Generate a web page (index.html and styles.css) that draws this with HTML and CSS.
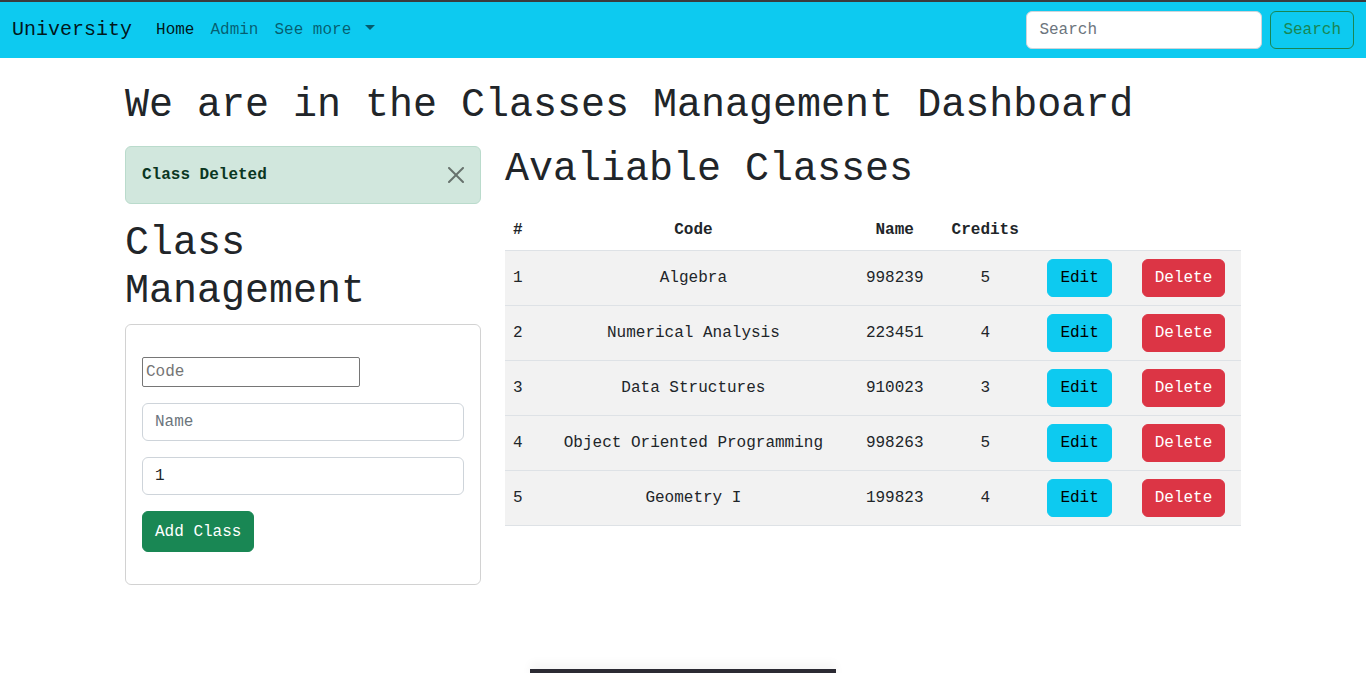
FILE: index.html
```html
<!DOCTYPE html>
<html lang="en">
<head>
<meta charset="utf-8">
<title>Classes Management</title>
<link rel="stylesheet" href="styles.css">
</head>
<body>
<nav class="navbar">
  <a class="brand" href="#">University</a>
  <ul class="nav">
    <li><a class="nav-link active" href="#">Home</a></li>
    <li><a class="nav-link" href="#">Admin</a></li>
    <li><a class="nav-link dropdown" href="#">See more</a></li>
  </ul>
  <form class="search">
    <input class="form-control search-input" type="search" placeholder="Search">
    <button class="btn btn-outline-success" type="button">Search</button>
  </form>
</nav>

<main class="container">
  <h1 class="title">We are in the Classes Management Dashboard</h1>
  <div class="row">
    <section class="col-left">
      <div class="alert">
        <strong>Class Deleted</strong>
        <button class="btn-close" type="button" aria-label="Close">
          <svg viewBox="0 0 16 16" width="16" height="16"><path d="M.293.293a1 1 0 0 1 1.414 0L8 6.586 14.293.293a1 1 0 1 1 1.414 1.414L9.414 8l6.293 6.293a1 1 0 0 1-1.414 1.414L8 9.414l-6.293 6.293a1 1 0 0 1-1.414-1.414L6.586 8 .293 1.707a1 1 0 0 1 0-1.414z" fill="#000"/></svg>
        </button>
      </div>
      <h1 class="heading">Class Management</h1>
      <div class="card">
        <form class="card-body">
          <div class="field field-first"><input class="plain-input" type="text" placeholder="Code"></div>
          <div class="field"><input class="form-control" type="text" placeholder="Name"></div>
          <div class="field"><input class="form-control" type="number" value="1"></div>
          <div class="field"><button class="btn btn-success btn-add" type="button">Add Class</button></div>
        </form>
      </div>
    </section>
    <section class="col-right">
      <h1 class="heading">Avaliable Classes</h1>
      <table class="table">
        <thead>
          <tr><th>#</th><th class="c">Code</th><th class="c">Name</th><th class="c">Credits</th><th></th><th></th></tr>
        </thead>
        <tbody>
          <tr><td>1</td><td class="c">Algebra</td><td class="c">998239</td><td class="c">5</td><td class="c"><button class="btn btn-info">Edit</button></td><td class="c"><button class="btn btn-danger">Delete</button></td></tr>
          <tr><td>2</td><td class="c">Numerical Analysis</td><td class="c">223451</td><td class="c">4</td><td class="c"><button class="btn btn-info">Edit</button></td><td class="c"><button class="btn btn-danger">Delete</button></td></tr>
          <tr><td>3</td><td class="c">Data Structures</td><td class="c">910023</td><td class="c">3</td><td class="c"><button class="btn btn-info">Edit</button></td><td class="c"><button class="btn btn-danger">Delete</button></td></tr>
          <tr><td>4</td><td class="c">Object Oriented Programming</td><td class="c">998263</td><td class="c">5</td><td class="c"><button class="btn btn-info">Edit</button></td><td class="c"><button class="btn btn-danger">Delete</button></td></tr>
          <tr><td>5</td><td class="c">Geometry I</td><td class="c">199823</td><td class="c">4</td><td class="c"><button class="btn btn-info">Edit</button></td><td class="c"><button class="btn btn-danger">Delete</button></td></tr>
        </tbody>
      </table>
    </section>
  </div>
  <div class="footer-bar"></div>
</main>
</body>
</html>
```

FILE: styles.css
```css
* { box-sizing: border-box; }
html, body { margin: 0; }
body {
  font-family: "Liberation Mono", "DejaVu Sans Mono", monospace;
  font-size: 16px;
  line-height: 1.5;
  color: #212529;
  background: #fff;
  overflow: hidden;
}
a { text-decoration: none; }

.navbar {
  display: flex;
  align-items: center;
  background: #0dcaf0;
  border-top: 2px solid #3a3b3d;
  padding: 8px 12px;
}
.brand {
  font-size: 20px;
  line-height: 30px;
  color: rgba(0,0,0,.9);
  margin-right: 16px;
  padding: 5px 0;
}
.nav {
  display: flex;
  list-style: none;
  margin: 0;
  padding: 0;
  flex: 1;
}
.nav-link {
  display: block;
  padding: 8px;
  color: rgba(0,0,0,.55);
}
.nav-link.active { color: rgba(0,0,0,.9); }
.dropdown::after {
  content: "";
  display: inline-block;
  margin-left: 14px;
  vertical-align: 4px;
  border-top: 5px solid;
  border-left: 5px solid transparent;
  border-right: 5px solid transparent;
}
.search { display: flex; }
.form-control {
  display: block;
  width: 100%;
  font: inherit;
  line-height: 24px;
  padding: 6px 12px;
  color: #212529;
  background: #fff;
  border: 1px solid #ced4da;
  border-radius: 6px;
}
.form-control::placeholder { color: #6c757d; }
.search-input { width: 236px; margin-right: 8px; }

.btn {
  display: inline-block;
  font: inherit;
  line-height: 24px;
  padding: 6px 12px;
  border: 1px solid transparent;
  border-radius: 6px;
  cursor: pointer;
}
.btn-add { padding: 8px 12px 7px; }
.btn-outline-success { color: #198754; border-color: #198754; background: transparent; }
.btn-success { color: #fff; background: #198754; border-color: #198754; }
.btn-info { color: #000; background: #0dcaf0; border-color: #0dcaf0; }
.btn-danger { color: #fff; background: #dc3545; border-color: #dc3545; }

.container {
  max-width: 1140px;
  margin: 0 auto;
  padding: 0 12px;
}
h1 {
  font-size: 40px;
  font-weight: 400;
  line-height: 1.2;
  margin: 0 0 8px;
}
.title { margin-top: 24px; }
.row {
  display: grid;
  grid-template-columns: 356px 1fr;
  column-gap: 24px;
  margin-top: 16px;
}
.col-left, .col-right { min-width: 0; }

.alert {
  position: relative;
  padding: 16px 48px 16px 16px;
  margin-bottom: 16px;
  color: #0a3622;
  background: #d1e7dd;
  border: 1px solid #badbcc;
  border-radius: 6px;
}
.btn-close {
  position: absolute;
  top: 0;
  right: 0;
  padding: 20px 16px;
  border: 0;
  background: transparent;
  opacity: .5;
  line-height: 0;
}
.btn-close svg { display: block; }

.card {
  border: 1px solid rgba(0,0,0,.175);
  border-radius: 6px;
}
.card-body { padding: 16px; }
.field { margin-bottom: 16px; }
.field-first { padding-top: 16px; }
.plain-input {
  display: block;
  width: 218px;
  height: 30px;
  font: inherit;
  padding: 1px 3px;
  border: 1px solid #767676;
  border-radius: 2px;
  color: #212529;
}
.plain-input::placeholder { color: #757575; }

.table {
  width: 100%;
  border-collapse: collapse;
  margin-top: 16px;
}
.table th, .table td {
  padding: 8px;
  vertical-align: middle;
  text-align: left;
  border-bottom: 1px solid #dee2e6;
}
.table th { font-weight: 700; }
.table .c { text-align: center; }
.table tbody tr { background: #f2f2f2; }

.footer-bar {
  width: 306px;
  height: 20px;
  margin: 84px auto 0;
  background: #2b2a33;
  box-shadow: 0 -6px 10px rgba(0,0,0,.04);
}
```
